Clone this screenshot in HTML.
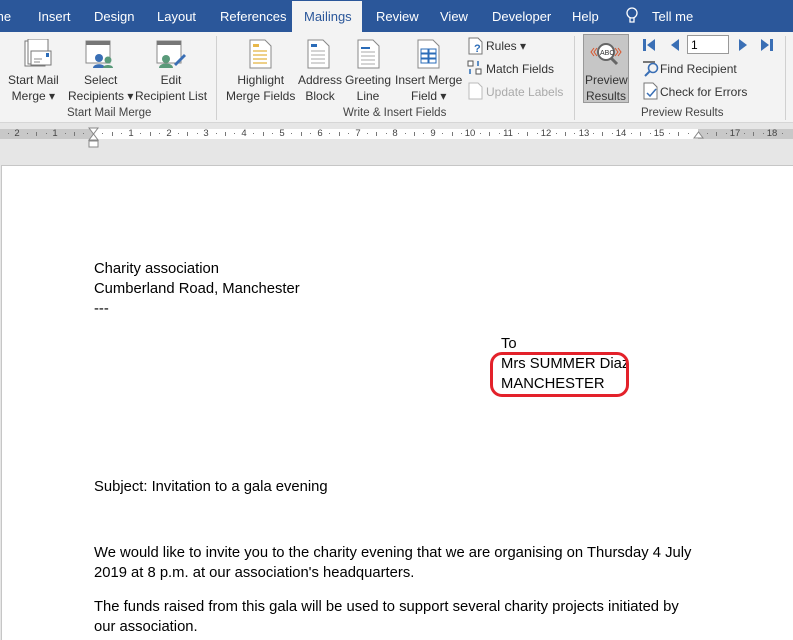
<!DOCTYPE html>
<html><head><meta charset="utf-8"><style>
*{margin:0;padding:0;box-sizing:border-box}
body{width:793px;height:640px;overflow:hidden;background:#e6e6e6;font-family:"Liberation Sans",sans-serif;position:relative}
.a{position:absolute;white-space:nowrap}
.tabs{position:absolute;left:0;top:0;width:793px;height:32px;background:#2b579a}
.tab{position:absolute;top:9px;color:#fff;font-size:13px}
.rib{position:absolute;left:0;top:32px;width:793px;height:91px;background:#f3f3f3;border-bottom:1px solid #d6d6d6}
.rl{position:absolute;font-size:12px;color:#333;text-align:center;line-height:16px;white-space:nowrap}
.grp{position:absolute;top:107px;font-size:11.5px;color:#444;white-space:nowrap}
.sep{position:absolute;top:36px;width:1px;height:84px;background:#d0d0d0}
.doc{font-size:14.8px;color:#000;line-height:20px}
.rn{position:absolute;top:128px;font-size:9.5px;color:#444;transform:translateX(-50%)}
.rt{position:absolute;top:132px;width:1px;height:4px;background:#777}
.rd{position:absolute;top:133px;width:1px;height:1px;background:#777}
</style></head><body>
<div class="tabs">
<div class="tab" style="left:-7px">me</div>
<div class="tab" style="left:38px">Insert</div>
<div class="tab" style="left:94px">Design</div>
<div class="tab" style="left:157px">Layout</div>
<div class="tab" style="left:220px">References</div>
<div style="position:absolute;left:292px;top:1px;width:70px;height:31px;background:#f3f3f3"></div>
<div class="tab" style="left:304px;color:#2b579a">Mailings</div>
<div class="tab" style="left:376px">Review</div>
<div class="tab" style="left:440px">View</div>
<div class="tab" style="left:492px">Developer</div>
<div class="tab" style="left:572px">Help</div>
<svg class="a" style="left:625px;top:7px" width="14" height="18"><circle cx="7" cy="6" r="5" fill="none" stroke="#fff" stroke-width="1.3"/><path d="M5 11v4h4v-4" fill="none" stroke="#fff" stroke-width="1.3"/></svg>
<div class="tab" style="left:652px">Tell me</div>
</div>
<div class="rib"></div>
<svg class="a" style="left:24px;top:39px" width="30" height="30"><rect x="1" y="2" width="20" height="25" fill="#fff" stroke="#777"/><rect x="4" y="0" width="20" height="25" fill="#fff" stroke="#777"/><rect x="7" y="12" width="20" height="14" fill="#fff" stroke="#777"/><rect x="22" y="14" width="3" height="4" fill="#2b6cb8"/><path d="M10 20h8M10 23h6" stroke="#888"/></svg>
<svg class="a" style="left:85px;top:40px" width="30" height="30"><rect x="1" y="1" width="24" height="22" fill="#fff" stroke="#888"/><rect x="1" y="1" width="24" height="4" fill="#777"/><circle cx="14" cy="18" r="4" fill="#3a6fb5"/><path d="M8 28c0-5 12-5 12 0z" fill="#3a6fb5"/><circle cx="23" cy="20" r="3.5" fill="#5a9a7a"/><path d="M18 28c0-4 10-4 10 0z" fill="#5a9a7a"/></svg>
<svg class="a" style="left:156px;top:40px" width="32" height="30"><rect x="1" y="1" width="24" height="22" fill="#fff" stroke="#888"/><rect x="1" y="1" width="24" height="4" fill="#777"/><circle cx="10" cy="19" r="4" fill="#5a9a7a"/><path d="M3 28c0-6 14-6 14 0z" fill="#5a9a7a"/><path d="M18 24l10-10 2 2-10 10z" fill="#3a6fb5"/></svg>
<div class="rl" style="left:8px;top:72px">Start Mail<br>Merge ▾</div>
<div class="rl" style="left:68px;top:72px">Select<br>Recipients ▾</div>
<div class="rl" style="left:135px;top:72px">Edit<br>Recipient List</div>
<div class="grp" style="left:67px">Start Mail Merge</div>
<div class="sep" style="left:216px"></div>
<svg class="a" style="left:249px;top:39px" width="24" height="30"><path d="M1 1h15l6 6v22H1z" fill="#fff" stroke="#888"/><rect x="4" y="5" width="6" height="3" fill="#e8b84a"/><path d="M4 12h14M4 16h14M4 20h14M4 24h14" stroke="#e8c060" stroke-width="1.5"/></svg>
<svg class="a" style="left:307px;top:39px" width="24" height="30"><path d="M1 1h15l6 6v22H1z" fill="#fff" stroke="#888"/><rect x="4" y="5" width="6" height="3" fill="#2b6cb8"/><path d="M4 12h14M4 16h14M4 20h14M4 24h14" stroke="#aaa"/></svg>
<svg class="a" style="left:357px;top:39px" width="24" height="30"><path d="M1 1h15l6 6v22H1z" fill="#fff" stroke="#888"/><rect x="4" y="8" width="9" height="2" fill="#2b6cb8"/><path d="M4 13h14M4 17h14M4 21h14M4 25h14" stroke="#aaa"/></svg>
<svg class="a" style="left:417px;top:39px" width="24" height="30"><path d="M1 1h15l6 6v22H1z" fill="#fff" stroke="#888"/><g fill="none" stroke="#2b6cb8"><rect x="4" y="10" width="7" height="4"/><rect x="12" y="10" width="7" height="4"/><rect x="4" y="15" width="7" height="4"/><rect x="12" y="15" width="7" height="4"/><rect x="4" y="20" width="7" height="4"/><rect x="12" y="20" width="7" height="4"/></g></svg>
<div class="rl" style="left:226px;top:72px">Highlight<br>Merge Fields</div>
<div class="rl" style="left:298px;top:72px">Address<br>Block</div>
<div class="rl" style="left:345px;top:72px">Greeting<br>Line</div>
<div class="rl" style="left:395px;top:72px">Insert Merge<br>Field ▾</div>
<svg class="a" style="left:468px;top:37px" width="16" height="18"><path d="M1 1h9l4 4v12H1z" fill="#fff" stroke="#777"/><text x="6" y="15" font-size="11" fill="#2b6cb8" font-weight="bold" font-family="Liberation Sans">?</text></svg>
<div class="rl" style="left:486px;top:38px">Rules ▾</div>
<svg class="a" style="left:467px;top:60px" width="16" height="16"><rect x="1" y="1" width="5" height="5" fill="#fff" stroke="#555"/><rect x="9" y="9" width="5" height="5" fill="#fff" stroke="#555"/><path d="M11 1v5M3 9v5" stroke="#2b6cb8" stroke-width="1.5"/></svg>
<div class="rl" style="left:486px;top:61px">Match Fields</div>
<svg class="a" style="left:468px;top:82px" width="16" height="18"><path d="M1 1h9l4 4v12H1z" fill="#fff" stroke="#bbb"/></svg>
<div class="rl" style="left:486px;top:84px;color:#aaa">Update Labels</div>
<div class="grp" style="left:343px">Write &amp; Insert Fields</div>
<div class="sep" style="left:574px"></div>
<div class="a" style="left:583px;top:34px;width:46px;height:69px;background:#c6c6c6;border:1px solid #999"></div>
<svg class="a" style="left:588px;top:40px" width="36" height="28"><circle cx="18" cy="12" r="8" fill="#fff" stroke="#666" stroke-width="2"/><path d="M23 18l6 6" stroke="#666" stroke-width="3"/><text x="12" y="15" font-size="7" font-family="Liberation Sans" fill="#333">ABC</text><path d="M6 8l-3 4 3 4M9 8l-3 4 3 4M30 8l3 4-3 4M27 8l3 4-3 4" stroke="#d9542b" fill="none"/></svg>
<div class="rl" style="left:585px;top:72px;width:42px">Preview<br>Results</div>
<svg class="a" style="left:642px;top:38px" width="140" height="14"><rect x="1" y="1" width="3" height="12" fill="#3a6fb5"/><path d="M13 1v12l-8-6z" fill="#3a6fb5"/><path d="M37 1v12l-8-6z" fill="#3a6fb5"/><path d="M97 1v12l8-6z" fill="#3a6fb5"/><path d="M119 1v12l8-6z" fill="#3a6fb5"/><rect x="128" y="1" width="3" height="12" fill="#3a6fb5"/></svg>
<div class="a" style="left:687px;top:35px;width:42px;height:19px;background:#fff;border:1px solid #999;font-size:12px;padding:2px 3px">1</div>
<svg class="a" style="left:642px;top:59px" width="18" height="18"><rect x="1" y="2" width="12" height="2" fill="#777"/><circle cx="11" cy="9" r="4.5" fill="none" stroke="#3a6fb5" stroke-width="1.6"/><path d="M8 12l-5 5" stroke="#3a6fb5" stroke-width="2"/></svg>
<div class="rl" style="left:660px;top:61px">Find Recipient</div>
<svg class="a" style="left:643px;top:82px" width="16" height="18"><path d="M1 1h9l4 4v12H1z" fill="#fff" stroke="#777"/><path d="M4 11l3 3 6-7" stroke="#3a6fb5" fill="none" stroke-width="1.5"/></svg>
<div class="rl" style="left:660px;top:84px">Check for Errors</div>
<div class="grp" style="left:641px">Preview Results</div>
<div class="sep" style="left:785px"></div>
<!-- ruler -->
<div class="a" style="left:0;top:123px;width:793px;height:18px;background:#e6e6e6"></div>
<div class="a" style="left:0;top:129px;width:793px;height:10px;background:#c8c8c8"></div>
<div class="a" style="left:93px;top:129px;width:605px;height:10px;background:#fff"></div>
<div class="rn" style="left:17px">2</div><div class="rn" style="left:55px">1</div>
<div class="rn" style="left:131px">1</div><div class="rn" style="left:169px">2</div><div class="rn" style="left:206px">3</div><div class="rn" style="left:244px">4</div><div class="rn" style="left:282px">5</div><div class="rn" style="left:320px">6</div><div class="rn" style="left:358px">7</div><div class="rn" style="left:395px">8</div><div class="rn" style="left:433px">9</div><div class="rn" style="left:470px">10</div><div class="rn" style="left:508px">11</div><div class="rn" style="left:546px">12</div><div class="rn" style="left:584px">13</div><div class="rn" style="left:621px">14</div><div class="rn" style="left:659px">15</div><div class="rn" style="left:735px">17</div><div class="rn" style="left:772px">18</div>
<div class="rt" style="left:36px"></div><div class="rt" style="left:74px"></div><div class="rt" style="left:112px"></div><div class="rt" style="left:150px"></div><div class="rt" style="left:187px"></div><div class="rt" style="left:225px"></div><div class="rt" style="left:263px"></div><div class="rt" style="left:301px"></div><div class="rt" style="left:339px"></div><div class="rt" style="left:376px"></div><div class="rt" style="left:414px"></div><div class="rt" style="left:452px"></div><div class="rt" style="left:489px"></div><div class="rt" style="left:527px"></div><div class="rt" style="left:565px"></div><div class="rt" style="left:602px"></div><div class="rt" style="left:640px"></div><div class="rt" style="left:678px"></div><div class="rt" style="left:716px"></div><div class="rt" style="left:753px"></div>
<div class="rd" style="left:8px"></div><div class="rd" style="left:27px"></div><div class="rd" style="left:46px"></div><div class="rd" style="left:65px"></div><div class="rd" style="left:83px"></div><div class="rd" style="left:102px"></div><div class="rd" style="left:121px"></div><div class="rd" style="left:140px"></div><div class="rd" style="left:159px"></div><div class="rd" style="left:178px"></div><div class="rd" style="left:197px"></div><div class="rd" style="left:216px"></div><div class="rd" style="left:234px"></div><div class="rd" style="left:253px"></div><div class="rd" style="left:272px"></div><div class="rd" style="left:291px"></div><div class="rd" style="left:310px"></div><div class="rd" style="left:329px"></div><div class="rd" style="left:348px"></div><div class="rd" style="left:367px"></div><div class="rd" style="left:386px"></div><div class="rd" style="left:405px"></div><div class="rd" style="left:423px"></div><div class="rd" style="left:442px"></div><div class="rd" style="left:461px"></div><div class="rd" style="left:480px"></div><div class="rd" style="left:499px"></div><div class="rd" style="left:518px"></div><div class="rd" style="left:537px"></div><div class="rd" style="left:556px"></div><div class="rd" style="left:574px"></div><div class="rd" style="left:593px"></div><div class="rd" style="left:612px"></div><div class="rd" style="left:631px"></div><div class="rd" style="left:650px"></div><div class="rd" style="left:669px"></div><div class="rd" style="left:688px"></div><div class="rd" style="left:707px"></div><div class="rd" style="left:726px"></div><div class="rd" style="left:744px"></div><div class="rd" style="left:763px"></div><div class="rd" style="left:782px"></div>
<svg class="a" style="left:88px;top:127px" width="12" height="22"><path d="M1 1h9L5.5 7z M1 13h9L5.5 7z" fill="#fff" stroke="#888"/><rect x="1" y="14" width="9" height="6" fill="#fff" stroke="#888"/></svg>
<svg class="a" style="left:693px;top:131px" width="12" height="8"><path d="M1 7h9L5.5 1z" fill="#fff" stroke="#888"/></svg>
<div class="a" style="left:1px;top:165px;width:792px;height:475px;background:#fff;border-left:1px solid #c6c6c6;border-top:1px solid #c6c6c6"></div>
<div class="a doc" style="left:94px;top:259px">Charity association<br>Cumberland Road, Manchester<br>---</div>
<div class="a doc" style="left:501px;top:334px">To<br>Mrs SUMMER Diaz<br>MANCHESTER</div>
<div class="a" style="left:490px;top:352px;width:139px;height:45px;border:3px solid #e3212a;border-radius:12px"></div>
<div class="a doc" style="left:94px;top:477px">Subject: Invitation to a gala evening</div>
<div class="a doc" style="left:94px;top:543px">We would like to invite you to the charity evening that we are organising on Thursday 4 July<br>2019 at 8 p.m. at our association's headquarters.</div>
<div class="a doc" style="left:94px;top:597px">The funds raised from this gala will be used to support several charity projects initiated by<br>our association.</div>
</body></html>
